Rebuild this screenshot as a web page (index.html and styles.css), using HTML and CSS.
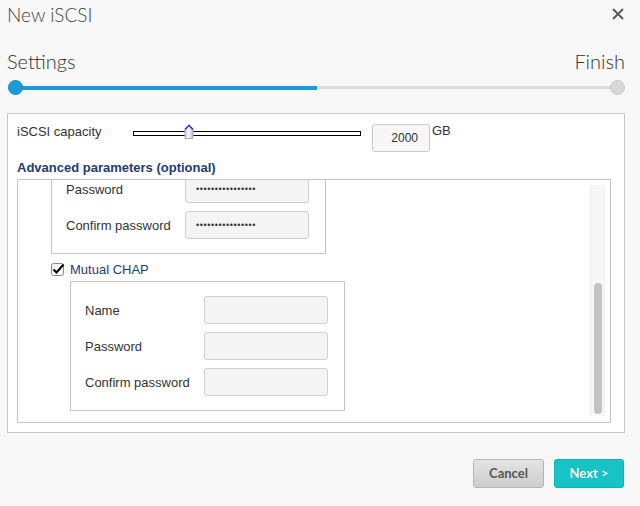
FILE: index.html
```html
<!DOCTYPE html>
<html lang="en">
<head>
<meta charset="utf-8">
<title>New iSCSI</title>
<link rel="stylesheet" href="styles.css">
</head>
<body>
<div class="dialog">
  <header class="titlebar">
    <h1 class="title">New iSCSI</h1>
    <button class="close" aria-label="Close">
      <svg width="12" height="12" viewBox="0 0 12 12"><path d="M1 1 L11 11 M11 1 L1 11" stroke="#555" stroke-width="1.8" fill="none"/></svg>
    </button>
  </header>

  <div class="steps"><span>Settings</span><span>Finish</span></div>
  <div class="progress">
    <div class="track"><div class="fill" style="width:50%"></div></div>
    <span class="dot dot-on"></span>
    <span class="dot dot-off"></span>
  </div>

  <section class="panel">
    <div class="capacity-row">
      <span class="cap-label">iSCSI capacity</span>
      <div class="slider">
        <div class="slider-track"></div>
        <svg class="slider-thumb" width="10" height="15" viewBox="0 0 10 15">
          <defs>
            <linearGradient id="tg" x1="0" y1="0" x2="1" y2="0">
              <stop offset="0" stop-color="#c9ced6"/>
              <stop offset="0.45" stop-color="#f7f8fa"/>
              <stop offset="1" stop-color="#b9bec7"/>
            </linearGradient>
          </defs>
          <path d="M1 14.5 L1 5 L5 1 L9 5 L9 14.5 Z" fill="url(#tg)" stroke="#a7abb2" stroke-width="1"/>
          <path d="M1 5.5 L5 1.3 L9 5.5" fill="none" stroke="#1f36e6" stroke-width="1.5"/>
        </svg>
      </div>
      <div class="cap-input">2000</div>
      <span class="unit">GB</span>
    </div>

    <h2 class="adv">Advanced parameters (optional)</h2>

    <div class="scrollbox">
      <div class="scroll-content">
        <div class="group group-chap">
          <span class="label">Name</span><div class="input"></div>
          <span class="label">Password</span><div class="input"><span class="dots">••••••••••••••••</span></div>
          <span class="label">Confirm password</span><div class="input"><span class="dots">••••••••••••••••</span></div>
        </div>
        <label class="check-row">
          <svg class="checkbox" width="14" height="14" viewBox="0 0 14 14">
            <rect x="0.5" y="1.5" width="12" height="12" rx="2" fill="#fafafa" stroke="#8a8a8a"/>
            <path d="M2.5 7.5 L5.5 10.5 L12.5 2.5" fill="none" stroke="#000" stroke-width="2"/>
          </svg>
          <span>Mutual CHAP</span>
        </label>
        <div class="group group-mutual">
          <span class="label">Name</span><div class="input"></div>
          <span class="label">Password</span><div class="input"></div>
          <span class="label">Confirm password</span><div class="input"></div>
        </div>
      </div>
      <div class="scrollbar"><div class="thumb"></div></div>
    </div>
  </section>

  <footer class="actions">
    <button class="btn btn-cancel">Cancel</button>
    <button class="btn btn-next">Next &gt;</button>
  </footer>
</div>
</body>
</html>
```

FILE: styles.css
```css
html, body {
  margin: 0;
  padding: 0;
}
body {
  width: 640px;
  height: 506px;
  overflow: hidden;
  background: #f8f8f8;
  font-family: "Liberation Sans", Arial, sans-serif;
  color: #333;
}

.dialog {
  padding: 3px 15px 0 7px;
}

.titlebar {
  display: flex;
  justify-content: space-between;
  align-items: flex-start;
  height: 24px;
}
.title {
  margin: 0;
  font: 300 19px/24px Lato, sans-serif;
  color: #444;
}
.close {
  margin: 5px 1px 0 0;
  padding: 0;
  width: 12px;
  height: 12px;
  border: 0;
  background: none;
  display: block;
}
.close svg { display: block; }

.steps {
  display: flex;
  justify-content: space-between;
  margin-top: 22px;
  font: 300 20px/24px Lato, sans-serif;
  color: #333;
}

.progress {
  position: relative;
  height: 15px;
  margin: 7px 0 0 1px;
  padding: 7px 7px 0;
  box-sizing: border-box;
}
.track {
  height: 3px;
  background: #dcdcdc;
}
.fill {
  height: 4px;
  margin-top: -1px;
  background: #1b9cd8;
}
.dot {
  position: absolute;
  top: 0;
  width: 15px;
  height: 15px;
  box-sizing: border-box;
  border-radius: 50%;
}
.dot-on {
  left: 0;
  background: #1b9cd8;
  border: 1px solid #1787bd;
}
.dot-off {
  right: 0;
  background: #d8d8d8;
  border: 1px solid #cacaca;
}

.panel {
  margin-top: 18px;
  background: #fff;
  border: 1px solid #c6c6c6;
  padding: 10px 13px 9px 9px;
}

.capacity-row {
  display: flex;
  align-items: flex-start;
  height: 28px;
}
.cap-label {
  width: 116px;
  font-size: 13px;
  line-height: 15px;
  color: #333;
}
.slider {
  position: relative;
  width: 228px;
  height: 15px;
}
.slider-track {
  margin-top: 7px;
  height: 5px;
  box-sizing: border-box;
  border: 1px solid #000;
  background: #fff;
}
.slider-thumb {
  position: absolute;
  left: 51px;
  top: 0;
}
.cap-input {
  margin-left: 11px;
  width: 58px;
  height: 28px;
  box-sizing: border-box;
  border: 1px solid #cacaca;
  border-radius: 3px;
  background: #f7f7f7;
  text-align: right;
  padding-right: 11px;
  font-size: 12px;
  line-height: 26px;
  color: #333;
}
.unit {
  margin-left: 2px;
  font-size: 13px;
  line-height: 13px;
  color: #333;
}

.adv {
  margin: 8px 0 4px;
  font: bold 13px/15px "Liberation Sans", Arial, sans-serif;
  color: #1f3b70;
}

.scrollbox {
  display: flex;
  height: 244px;
  box-sizing: border-box;
  border: 1px solid #c6c6c6;
}
.scroll-content {
  flex: 1;
  overflow: hidden;
  padding-left: 33px;
}

.group {
  display: grid;
  grid-template-columns: 119px 124px;
  row-gap: 8px;
  align-items: center;
  width: max-content;
  padding: 14px 16px 14px 14px;
  border: 1px solid #c6c6c6;
}
.group-chap {
  margin-top: -56px;
}
.group-mutual {
  margin: 5px 0 0 19px;
}
.label {
  font-size: 13px;
  color: #333;
}
.input {
  height: 28px;
  box-sizing: border-box;
  border: 1px solid #d0d0d0;
  border-radius: 3px;
  background: #f4f4f4;
  padding-left: 10px;
  display: flex;
  align-items: center;
}
.dots {
  font-size: 9px;
  letter-spacing: 0.6px;
  color: #333;
}

.check-row {
  display: flex;
  align-items: center;
  gap: 5px;
  margin-top: 9px;
  height: 13px;
  font-size: 13px;
  line-height: 13px;
  color: #1f3b70;
}
.checkbox {
  display: block;
  margin-top: -1px;
}

.scrollbar {
  width: 15px;
  margin: 5px 5px 6px 0;
  box-sizing: border-box;
  background: #f7f7f7;
  border-left: 1px solid #efefef;
  border-right: 1px solid #efefef;
  padding: 0 2px 2px 3px;
  display: flex;
  flex-direction: column;
  justify-content: flex-end;
}
.thumb {
  height: 131px;
  border-radius: 4px;
  background: #c2c2c2;
}

.actions {
  display: flex;
  justify-content: flex-end;
  gap: 10px;
  margin-top: 26px;
  padding-right: 1px;
}
.btn {
  height: 29px;
  padding: 0;
  border-radius: 3px;
  font: 700 13px/27px Lato, sans-serif;
  box-sizing: border-box;
}
.btn-cancel {
  width: 71px;
  background: linear-gradient(#e4e4e4, #cdcdcd);
  border: 1px solid #b4b4b4;
  color: #555;
}
.btn-next {
  width: 70px;
  background: #17c4c5;
  border: 1px solid #11b0b2;
  color: #fff;
  text-shadow: 0 0 1px rgba(0, 0, 0, 0.25);
}
```
